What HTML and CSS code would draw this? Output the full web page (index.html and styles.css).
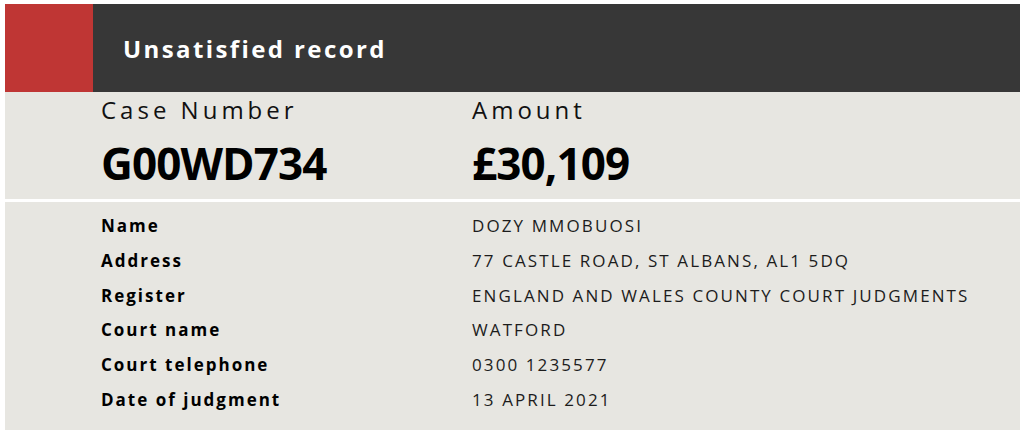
FILE: index.html
```html
<!DOCTYPE html>
<html lang="en">
<head>
<meta charset="utf-8">
<title>Unsatisfied record</title>
<link rel="stylesheet" href="styles.css">
</head>
<body>
<section class="record">
  <header class="record-header">
    <div class="flag"></div>
    <h1 class="title">Unsatisfied record</h1>
  </header>
  <div class="summary">
    <div class="summary-item">
      <div class="summary-label">Case Number</div>
      <div class="summary-value">G00WD734</div>
    </div>
    <div class="summary-item">
      <div class="summary-label">Amount</div>
      <div class="summary-value">£30,109</div>
    </div>
  </div>
  <dl class="details">
    <dt>Name</dt><dd>DOZY MMOBUOSI</dd>
    <dt>Address</dt><dd>77 CASTLE ROAD, ST ALBANS, AL1 5DQ</dd>
    <dt>Register</dt><dd>ENGLAND AND WALES COUNTY COURT JUDGMENTS</dd>
    <dt>Court name</dt><dd>WATFORD</dd>
    <dt>Court telephone</dt><dd>0300 1235577</dd>
    <dt>Date of judgment</dt><dd>13 APRIL 2021</dd>
  </dl>
</section>
</body>
</html>
```
FILE: styles.css
```css
html, body {
  margin: 0;
  padding: 0;
  background: #ffffff;
}
body {
  padding: 4px 4px 0 5px;
  font-family: "Open Sans", "Noto Sans", sans-serif;
  color: #000;
}
.record {
  width: 1015px;
}
.record-header {
  display: flex;
  height: 88px;
  background: #373737;
}
.flag {
  width: 88px;
  background: #bf3634;
}
.title {
  margin: 0;
  padding-left: 30px;
  display: flex;
  align-items: center;
  color: #ffffff;
  font-size: 24px;
  font-weight: 700;
  letter-spacing: 2.4px;
}
.summary {
  display: grid;
  grid-template-columns: 371px 1fr;
  height: 107px;
  box-sizing: border-box;
  padding: 1px 0 0 96px;
  background: #e7e6e1;
}
.summary-label {
  font-size: 24px;
  line-height: 33px;
  letter-spacing: 4px;
  color: #111;
}
.summary-value {
  margin-top: 7px;
  font-size: 44px;
  line-height: 60px;
  font-weight: 700;
  letter-spacing: -0.9px;
}
.details {
  display: grid;
  grid-template-columns: 371px 1fr;
  margin: 3px 0 0;
  padding: 7px 0 12px 96px;
  background: #e7e6e1;
}
.details dt,
.details dd {
  margin: 0;
  font-size: 17px;
  line-height: 34.8px;
  letter-spacing: 2px;
}
.details dt {
  font-weight: 700;
  color: #000;
}
.details dd {
  color: #1c1c1c;
  letter-spacing: 2.1px;
}
```
